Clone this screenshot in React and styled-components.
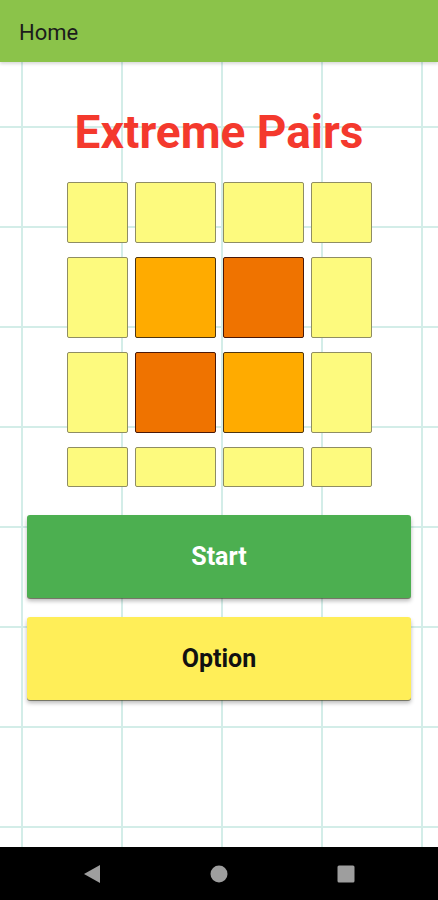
import React from 'react';
import styled, { createGlobalStyle } from 'styled-components';

const GlobalStyle = createGlobalStyle`
  html, body {
    margin: 0;
    padding: 0;
    background: #ffffff;
  }
  body {
    font-family: Roboto, "Liberation Sans", sans-serif;
  }
`;

const Page = styled.div`
  width: 438px;
  height: 900px;
  display: flex;
  flex-direction: column;
  overflow: hidden;
`;

const AppBar = styled.header`
  height: 62px;
  flex: 0 0 62px;
  background: #8bc34a;
  display: flex;
  align-items: center;
  padding: 2px 0 0 19px;
  box-sizing: border-box;
  font-size: 22px;
  color: #1c1c1c;
  box-shadow: 0 2px 3px rgba(0, 0, 0, 0.15);
  position: relative;
  z-index: 1;
`;

const Board = styled.main`
  flex: 1;
  display: flex;
  flex-direction: column;
  align-items: center;
  background-color: #ffffff;
  background-image:
    linear-gradient(to right, #d3ede8 2px, transparent 2px),
    linear-gradient(to bottom, #d3ede8 2px, transparent 2px);
  background-size: 100px 100px;
  background-position: 21px 64px;
`;

const Title = styled.h1`
  margin: 43px 0 0;
  font-size: 46px;
  line-height: 54px;
  font-weight: 700;
  color: #f4392d;
`;

const TileGrid = styled.div`
  margin-top: 23px;
  display: grid;
  grid-template-columns: 61px 81px 81px 61px;
  grid-template-rows: 61px 81px 81px 40px;
  column-gap: 7px;
  row-gap: 14px;
`;

const tileColors = {
  pale: { bg: '#fdfa7e', border: '#8f8d63' },
  amber: { bg: '#ffab00', border: '#4e3510' },
  orange: { bg: '#ef7300', border: '#4a1808' },
};

const Tile = styled.div`
  background: ${(p) => tileColors[p.kind].bg};
  border: 1px solid ${(p) => tileColors[p.kind].border};
  border-radius: 2px;
  box-sizing: border-box;
`;

const Actions = styled.div`
  align-self: stretch;
  margin: 28px 27px 0;
  display: flex;
  flex-direction: column;
  gap: 19px;
`;

const ActionButton = styled.button`
  height: 83px;
  border: none;
  border-radius: 3px;
  background: ${(p) => (p.primary ? '#4caf50' : '#ffee58')};
  color: ${(p) => (p.primary ? '#ffffff' : '#111111')};
  font-family: Roboto, "Liberation Sans", sans-serif;
  font-size: 25px;
  font-weight: 700;
  box-shadow: 0 3px 4px rgba(0, 0, 0, 0.28), 0 1px 0 rgba(60, 60, 20, 0.5);
`;

const NavBar = styled.nav`
  height: 53px;
  flex: 0 0 53px;
  background: #000000;
  display: flex;
  align-items: center;
  justify-content: center;
  gap: 107px;
`;

const layout = [
  ['pale', 'pale', 'pale', 'pale'],
  ['pale', 'amber', 'orange', 'pale'],
  ['pale', 'orange', 'amber', 'pale'],
  ['pale', 'pale', 'pale', 'pale'],
];

const App = () => {
  return (
    <Page>
      <GlobalStyle />
      <AppBar>Home</AppBar>
      <Board>
        <Title>Extreme Pairs</Title>
        <TileGrid>
          {layout.flat().map((kind, i) => (
            <Tile key={i} kind={kind} />
          ))}
        </TileGrid>
        <Actions>
          <ActionButton primary>Start</ActionButton>
          <ActionButton>Option</ActionButton>
        </Actions>
      </Board>
      <NavBar>
        <svg width="20" height="20" viewBox="0 0 20 20">
          <path d="M18 1 L18 19 L2 10 Z" fill="#9e9e9e" />
        </svg>
        <svg width="20" height="20" viewBox="0 0 20 20">
          <circle cx="10" cy="10" r="8.5" fill="#9e9e9e" />
        </svg>
        <svg width="20" height="20" viewBox="0 0 20 20">
          <rect x="1.5" y="1.5" width="17" height="17" rx="1.5" fill="#9e9e9e" />
        </svg>
      </NavBar>
    </Page>
  );
};

export default App;
